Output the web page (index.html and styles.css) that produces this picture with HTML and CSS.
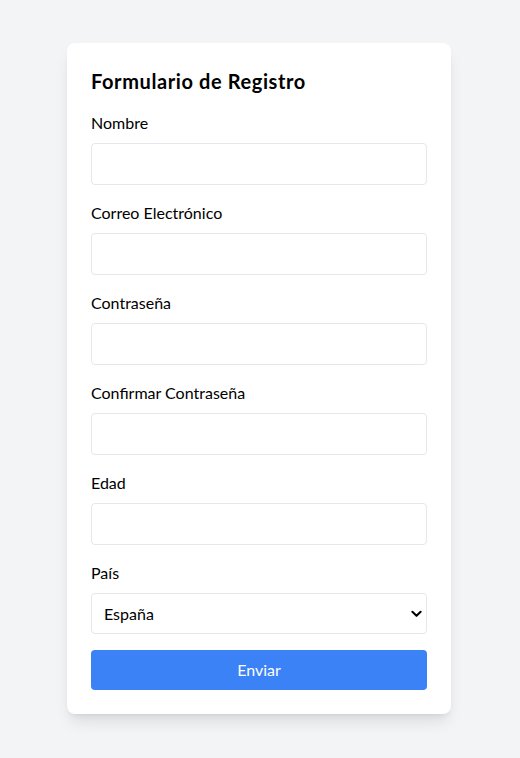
FILE: index.html
```html
<!DOCTYPE html>
<html lang="es">
<head>
<meta charset="utf-8">
<title>Formulario de Registro</title>
<link rel="stylesheet" href="styles.css">
</head>
<body>
<main class="page">
  <form class="card">
    <h2 class="title">Formulario de Registro</h2>
    <div class="field">
      <label class="label" for="nombre">Nombre</label>
      <input class="input" id="nombre" type="text">
    </div>
    <div class="field">
      <label class="label" for="correo">Correo Electrónico</label>
      <input class="input" id="correo" type="email">
    </div>
    <div class="field">
      <label class="label" for="pass">Contraseña</label>
      <input class="input" id="pass" type="password">
    </div>
    <div class="field">
      <label class="label" for="pass2">Confirmar Contraseña</label>
      <input class="input" id="pass2" type="password">
    </div>
    <div class="field">
      <label class="label" for="edad">Edad</label>
      <input class="input" id="edad" type="number">
    </div>
    <div class="field">
      <label class="label" for="pais">País</label>
      <div class="select-wrap">
        <select class="input select" id="pais">
          <option>España</option>
        </select>
        <svg class="chevron" viewBox="0 0 12 8" width="11" height="8" aria-hidden="true"><path d="M1.5 1.5 6 6l4.5-4.5" fill="none" stroke="#000" stroke-width="2.2" stroke-linecap="round" stroke-linejoin="round"/></svg>
      </div>
    </div>
    <button class="button" type="button">Enviar</button>
  </form>
</main>
</body>
</html>
```

FILE: styles.css
```css
* { box-sizing: border-box; }
html, body { margin: 0; padding: 0; }
body {
  background: #f3f4f6;
  font-family: "Lato", "Noto Sans", sans-serif;
  color: #000;
}
.page {
  min-height: 758px;
  display: flex;
  align-items: center;
  justify-content: center;
  padding-right: 2px;
  padding-bottom: 1px;
}
.card {
  width: 384px;
  background: #fff;
  border-radius: 8px;
  padding: 24px;
  box-shadow: 0 10px 15px -3px rgba(0,0,0,0.1), 0 4px 6px -4px rgba(0,0,0,0.1);
  display: flex;
  flex-direction: column;
}
.title {
  margin: 0 0 16px;
  font-size: 20px;
  line-height: 28px;
  font-weight: 700;
  letter-spacing: 0.6px;
}
.field {
  display: flex;
  flex-direction: column;
  margin-bottom: 16px;
}
.label {
  font-size: 16px;
  line-height: 24px;
  margin-bottom: 8px;
}
.input {
  width: 100%;
  height: 42px;
  border: 1px solid #e5e7eb;
  border-radius: 4px;
  padding: 8px 12px;
  font: inherit;
  font-size: 16px;
  line-height: 24px;
  background: #fff;
  color: #000;
  outline: none;
}
.select-wrap { position: relative; }
.select {
  appearance: none;
  -webkit-appearance: none;
  height: 41px;
  padding: 7px 12px;
}
.chevron {
  position: absolute;
  right: 5px;
  top: 17px;
  pointer-events: none;
}
.button {
  height: 40px;
  border: none;
  border-radius: 4px;
  background: #3b82f6;
  color: #fff;
  font: inherit;
  font-size: 16px;
  line-height: 24px;
  cursor: pointer;
}
```
